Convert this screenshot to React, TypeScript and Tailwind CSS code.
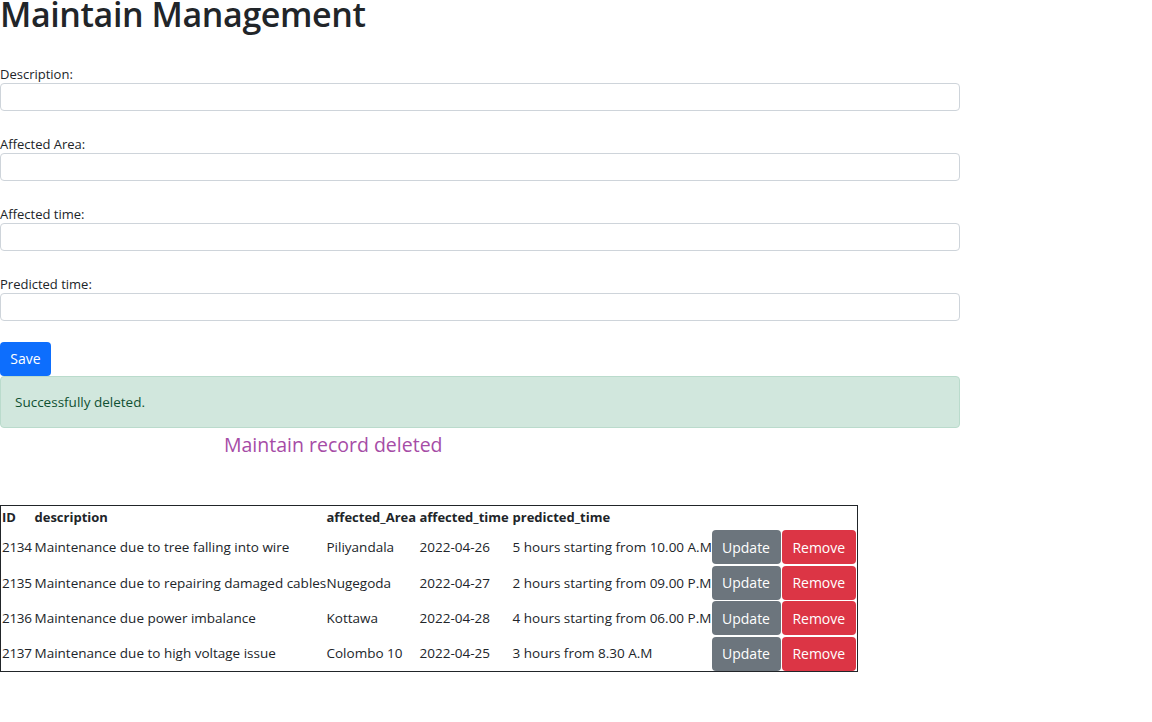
import React from "react";

const rows = [
  { id: "2134", description: "Maintenance due to tree falling into wire", area: "Piliyandala", time: "2022-04-26", predicted: "5 hours starting from 10.00 A.M" },
  { id: "2135", description: "Maintenance due to repairing damaged cables", area: "Nugegoda", time: "2022-04-27", predicted: "2 hours starting from 09.00 P.M" },
  { id: "2136", description: "Maintenance due power imbalance", area: "Kottawa", time: "2022-04-28", predicted: "4 hours starting from 06.00 P.M" },
  { id: "2137", description: "Maintenance due to high voltage issue", area: "Colombo 10", time: "2022-04-25", predicted: "3 hours from 8.30 A.M" },
];

const fields = ["Description:", "Affected Area:", "Affected time:", "Predicted time:"];

export default function App() {
  return (
    <div className="min-h-screen bg-white text-[#212529] font-['Segoe_UI','Open_Sans',sans-serif] text-[14px]">
      <h1 className="text-[34px] font-semibold leading-[28px] h-[30px] tracking-[-0.4px]">Maintain Management</h1>

      <form className="w-[960px] mt-[35px] flex flex-col">
        <div className="flex flex-col gap-[24px]">
          {fields.map((label) => (
            <div key={label}>
              <label className="block text-[13px] leading-[18px]">{label}</label>
              <input
                type="text"
                className="block w-full h-[28px] border border-[#ced4da] rounded-[4px] px-2 outline-none"
              />
            </div>
          ))}
        </div>

        <button
          type="button"
          className="mt-[21px] h-[34px] w-[51px] rounded-[4px] bg-[#0d6efd] text-white text-[14px] leading-none"
        >
          Save
        </button>

        <div className="h-[52px] border border-[#badbcc] bg-[#d1e7dd] text-[#0f5132] rounded-[4px] px-[14px] flex items-center text-[13.5px]">
          Successfully deleted.
        </div>
      </form>

      <p className="ml-[224px] mt-[4px] text-[19.5px] leading-[26px] text-[#a64ca6]">Maintain record deleted</p>

      <table className="mt-[47px] w-[857px] table-fixed border border-[#212529] border-collapse text-left">
        <colgroup>
          <col className="w-[34px]" />
          <col className="w-[292px]" />
          <col className="w-[93px]" />
          <col className="w-[93px]" />
          <col className="w-[199px]" />
          <col className="w-[70px]" />
          <col className="w-[76px]" />
        </colgroup>
        <thead>
          <tr className="h-[24px] text-[13px]">
            <th className="pl-[1px] font-bold">ID</th>
            <th className="font-bold">description</th>
            <th className="font-bold whitespace-nowrap">affected_Area</th>
            <th className="font-bold whitespace-nowrap">affected_time</th>
            <th className="font-bold whitespace-nowrap">predicted_time</th>
            <th />
            <th />
          </tr>
        </thead>
        <tbody>
          {rows.map((row) => (
            <tr key={row.id} className="h-[35.5px] text-[13.5px]">
              <td className="pl-[1px] tracking-[-0.3px]">{row.id}</td>
              <td className="whitespace-nowrap">{row.description}</td>
              <td className="whitespace-nowrap">{row.area}</td>
              <td className="whitespace-nowrap">{row.time}</td>
              <td className="whitespace-nowrap">{row.predicted}</td>
              <td className="p-0 pr-[1px]">
                <button type="button" className="w-full h-[34px] rounded-[4px] bg-[#6c757d] text-white text-[14px]">
                  Update
                </button>
              </td>
              <td className="p-0 pr-[1px]">
                <button type="button" className="w-full h-[34px] rounded-[4px] bg-[#dc3545] text-white text-[14px]">
                  Remove
                </button>
              </td>
            </tr>
          ))}
        </tbody>
      </table>
    </div>
  );
}
